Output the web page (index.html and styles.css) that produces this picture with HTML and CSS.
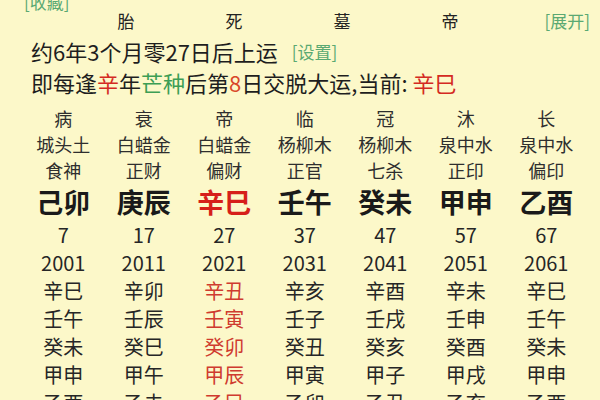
FILE: index.html
```html
<!DOCTYPE html>
<html lang="zh">
<head>
<meta charset="utf-8">
<link rel="stylesheet" href="styles.css">
</head>
<body>
<div class="page">
  <div class="fav link">[收藏]</div>
  <div class="stages">
    <span class="stage">胎</span>
    <span class="stage">死</span>
    <span class="stage">墓</span>
    <span class="stage">帝</span>
    <span class="link expand">[展开]</span>
  </div>
  <div class="info first">约6年3个月零27日后上运 <span class="link small">[设置]</span></div>
  <div class="info">即每逢<span class="red">辛</span>年<span class="green">芒种</span>后第<span class="orange">8</span>日交脱大运,当前: <span class="red">辛巳</span></div>

  <div class="grid">
    <div class="col">
      <div class="h">病</div><div class="h">城头土</div><div class="h">食神</div><div class="gz">己卯</div>
      <div class="n">7</div><div class="n">2001</div><div class="n">辛巳</div><div class="n">壬午</div><div class="n">癸未</div><div class="n">甲申</div><div class="n">乙酉</div>
    </div>
    <div class="col">
      <div class="h">衰</div><div class="h">白蜡金</div><div class="h">正财</div><div class="gz">庚辰</div>
      <div class="n">17</div><div class="n">2011</div><div class="n">辛卯</div><div class="n">壬辰</div><div class="n">癸巳</div><div class="n">甲午</div><div class="n">乙未</div>
    </div>
    <div class="col">
      <div class="h">帝</div><div class="h">白蜡金</div><div class="h">偏财</div><div class="gz cur">辛巳</div>
      <div class="n">27</div><div class="n">2021</div><div class="n curl">辛丑</div><div class="n curl">壬寅</div><div class="n curl">癸卯</div><div class="n curl">甲辰</div><div class="n curl">乙巳</div>
    </div>
    <div class="col">
      <div class="h">临</div><div class="h">杨柳木</div><div class="h">正官</div><div class="gz">壬午</div>
      <div class="n">37</div><div class="n">2031</div><div class="n">辛亥</div><div class="n">壬子</div><div class="n">癸丑</div><div class="n">甲寅</div><div class="n">乙卯</div>
    </div>
    <div class="col">
      <div class="h">冠</div><div class="h">杨柳木</div><div class="h">七杀</div><div class="gz">癸未</div>
      <div class="n">47</div><div class="n">2041</div><div class="n">辛酉</div><div class="n">壬戌</div><div class="n">癸亥</div><div class="n">甲子</div><div class="n">乙丑</div>
    </div>
    <div class="col">
      <div class="h">沐</div><div class="h">泉中水</div><div class="h">正印</div><div class="gz">甲申</div>
      <div class="n">57</div><div class="n">2051</div><div class="n">辛未</div><div class="n">壬申</div><div class="n">癸酉</div><div class="n">甲戌</div><div class="n">乙亥</div>
    </div>
    <div class="col">
      <div class="h">长</div><div class="h">泉中水</div><div class="h">偏印</div><div class="gz">乙酉</div>
      <div class="n">67</div><div class="n">2061</div><div class="n">辛巳</div><div class="n">壬午</div><div class="n">癸未</div><div class="n">甲申</div><div class="n">乙酉</div>
    </div>
  </div>
</div>
</body>
</html>
```

FILE: styles.css
```css
html, body {
  margin: 0;
  padding: 0;
  background: #fcf8c9;
  overflow: hidden;
}
body {
  width: 600px;
  height: 400px;
  font-family: "Noto Sans CJK SC", "Noto Sans", sans-serif;
  color: #222;
}
.page {
  display: flex;
  flex-direction: column;
}
.link {
  color: #5aa972;
}
.fav {
  font-size: 17px;
  line-height: 16px;
  margin-top: -6px;
  padding-left: 24px;
}
.stages {
  display: grid;
  grid-template-columns: repeat(4, 108px) 1fr;
  padding-left: 72px;
  padding-right: 10px;
  font-size: 17px;
  line-height: 22px;
}
.stage {
  text-align: center;
}
.expand {
  text-align: right;
  font-size: 17px;
}
.info {
  font-size: 22px;
  line-height: 30px;
  padding-left: 31px;
  color: #1e1e1e;
}
.info.first {
  margin-top: 4px;
}
.small {
  font-size: 17px;
  margin-left: 9px;
  vertical-align: 2px;
}
.red { color: #d42a22; }
.green { color: #3d9e55; }
.orange { color: #d9482a; }

.grid {
  display: grid;
  grid-template-columns: repeat(7, 80.5px);
  padding-left: 23px;
  margin-top: 8px;
}
.col {
  display: flex;
  flex-direction: column;
  align-items: center;
}
.h {
  font-size: 18px;
  line-height: 26px;
  color: #2e2e2e;
}
.gz {
  font-size: 27px;
  font-weight: 700;
  line-height: 38px;
  color: #1a1a1a;
  margin-bottom: 0;
}
.gz.cur { color: #d61f1a; }
.n {
  font-size: 20px;
  line-height: 28px;
  color: #262626;
}
.n.curl { color: #cf3b2f; }
```
